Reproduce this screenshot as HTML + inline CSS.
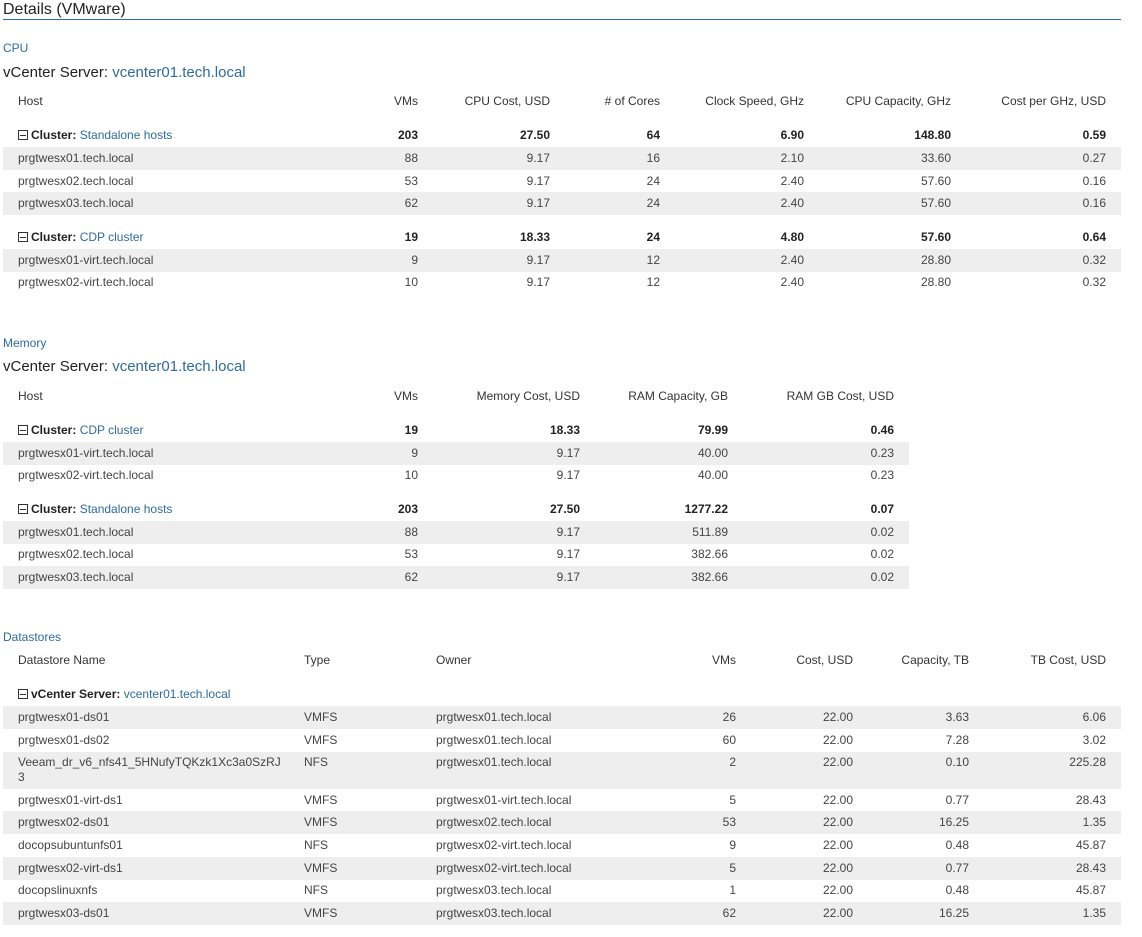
<!DOCTYPE html>
<html><head><meta charset="utf-8"><style>
body{margin:0;width:1142px;height:937px;background:#fff;font-family:"Liberation Sans",Arial,sans-serif;font-size:12px;color:#444;position:relative;overflow:hidden}
.a{position:absolute;white-space:nowrap}
.t{left:3px;top:0;font-size:16px;color:#222;line-height:20px}
.hl{left:3px;top:19px;width:1118px;height:1px;background:#2e6b9e}
.sec{left:3px;font-size:12px;color:#2e6b9e}
.vc{left:3px;font-size:15px;color:#222}
.b{color:#2e6b9e}
.r{position:absolute;left:3px;height:23px;line-height:23px}
.r span{position:absolute;top:0;white-space:nowrap}
.w1{width:1118px}.w2{width:906px}
.g{background:#eee}
.h{color:#333}
.k{font-weight:bold;color:#222}
.n{left:15px}
.box{display:inline-block;width:8px;height:8px;border:1px solid #333;position:relative;margin-right:3px;vertical-align:-1px}
.box:after{content:"";position:absolute;left:1px;right:1px;top:4px;height:1px;background:#333}
.k .b{font-weight:normal}
</style></head><body>
<div class="a t">Details (VMware)</div>
<div class="a hl"></div>

<div class="a sec" style="top:41px">CPU</div>
<div class="a vc" style="top:64px">vCenter Server: <span class="b">vcenter01.tech.local</span></div>
<div class="r w1 h" style="top:90px"><span class="n">Host</span><span style="right:703px">VMs</span><span style="right:571px">CPU Cost, USD</span><span style="right:461px"># of Cores</span><span style="right:317px">Clock Speed, GHz</span><span style="right:170px">CPU Capacity, GHz</span><span style="right:15px">Cost per GHz, USD</span></div>
<div class="r w1 k" style="top:124px"><span class="n"><i class="box"></i>Cluster: <span class="b" style="position:static">Standalone hosts</span></span><span style="right:703px">203</span><span style="right:571px">27.50</span><span style="right:461px">64</span><span style="right:317px">6.90</span><span style="right:170px">148.80</span><span style="right:15px">0.59</span></div>
<div class="r w1 g" style="top:147px"><span class="n">prgtwesx01.tech.local</span><span style="right:703px">88</span><span style="right:571px">9.17</span><span style="right:461px">16</span><span style="right:317px">2.10</span><span style="right:170px">33.60</span><span style="right:15px">0.27</span></div>
<div class="r w1" style="top:170px"><span class="n">prgtwesx02.tech.local</span><span style="right:703px">53</span><span style="right:571px">9.17</span><span style="right:461px">24</span><span style="right:317px">2.40</span><span style="right:170px">57.60</span><span style="right:15px">0.16</span></div>
<div class="r w1 g" style="top:192px"><span class="n">prgtwesx03.tech.local</span><span style="right:703px">62</span><span style="right:571px">9.17</span><span style="right:461px">24</span><span style="right:317px">2.40</span><span style="right:170px">57.60</span><span style="right:15px">0.16</span></div>
<div class="r w1 k" style="top:226px"><span class="n"><i class="box"></i>Cluster: <span class="b" style="position:static">CDP cluster</span></span><span style="right:703px">19</span><span style="right:571px">18.33</span><span style="right:461px">24</span><span style="right:317px">4.80</span><span style="right:170px">57.60</span><span style="right:15px">0.64</span></div>
<div class="r w1 g" style="top:249px"><span class="n">prgtwesx01-virt.tech.local</span><span style="right:703px">9</span><span style="right:571px">9.17</span><span style="right:461px">12</span><span style="right:317px">2.40</span><span style="right:170px">28.80</span><span style="right:15px">0.32</span></div>
<div class="r w1" style="top:271px"><span class="n">prgtwesx02-virt.tech.local</span><span style="right:703px">10</span><span style="right:571px">9.17</span><span style="right:461px">12</span><span style="right:317px">2.40</span><span style="right:170px">28.80</span><span style="right:15px">0.32</span></div>

<div class="a sec" style="top:336px">Memory</div>
<div class="a vc" style="top:358px">vCenter Server: <span class="b">vcenter01.tech.local</span></div>
<div class="r w2 h" style="top:385px"><span class="n">Host</span><span style="right:491px">VMs</span><span style="right:329px">Memory Cost, USD</span><span style="right:181px">RAM Capacity, GB</span><span style="right:15px">RAM GB Cost, USD</span></div>
<div class="r w2 k" style="top:419px"><span class="n"><i class="box"></i>Cluster: <span class="b" style="position:static">CDP cluster</span></span><span style="right:491px">19</span><span style="right:329px">18.33</span><span style="right:181px">79.99</span><span style="right:15px">0.46</span></div>
<div class="r w2 g" style="top:442px"><span class="n">prgtwesx01-virt.tech.local</span><span style="right:491px">9</span><span style="right:329px">9.17</span><span style="right:181px">40.00</span><span style="right:15px">0.23</span></div>
<div class="r w2" style="top:464px"><span class="n">prgtwesx02-virt.tech.local</span><span style="right:491px">10</span><span style="right:329px">9.17</span><span style="right:181px">40.00</span><span style="right:15px">0.23</span></div>
<div class="r w2 k" style="top:498px"><span class="n"><i class="box"></i>Cluster: <span class="b" style="position:static">Standalone hosts</span></span><span style="right:491px">203</span><span style="right:329px">27.50</span><span style="right:181px">1277.22</span><span style="right:15px">0.07</span></div>
<div class="r w2 g" style="top:521px"><span class="n">prgtwesx01.tech.local</span><span style="right:491px">88</span><span style="right:329px">9.17</span><span style="right:181px">511.89</span><span style="right:15px">0.02</span></div>
<div class="r w2" style="top:543px"><span class="n">prgtwesx02.tech.local</span><span style="right:491px">53</span><span style="right:329px">9.17</span><span style="right:181px">382.66</span><span style="right:15px">0.02</span></div>
<div class="r w2 g" style="top:566px"><span class="n">prgtwesx03.tech.local</span><span style="right:491px">62</span><span style="right:329px">9.17</span><span style="right:181px">382.66</span><span style="right:15px">0.02</span></div>

<div class="a sec" style="top:630px">Datastores</div>
<div class="r w1 h" style="top:649px"><span class="n">Datastore Name</span><span style="left:301px">Type</span><span style="left:433px">Owner</span><span style="right:385px">VMs</span><span style="right:268px">Cost, USD</span><span style="right:152px">Capacity, TB</span><span style="right:15px">TB Cost, USD</span></div>
<div class="r w1 k" style="top:683px"><span class="n"><i class="box"></i>vCenter Server: <span class="b" style="position:static">vcenter01.tech.local</span></span></div>
<div class="r w1 g" style="top:706px"><span class="n">prgtwesx01-ds01</span><span style="left:301px">VMFS</span><span style="left:433px">prgtwesx01.tech.local</span><span style="right:385px">26</span><span style="right:268px">22.00</span><span style="right:152px">3.63</span><span style="right:15px">6.06</span></div>
<div class="r w1" style="top:729px"><span class="n">prgtwesx01-ds02</span><span style="left:301px">VMFS</span><span style="left:433px">prgtwesx01.tech.local</span><span style="right:385px">60</span><span style="right:268px">22.00</span><span style="right:152px">7.28</span><span style="right:15px">3.02</span></div>
<div class="r w1 g" style="top:752px;height:37px"><span class="n" style="line-height:15px;top:3px">Veeam_dr_v6_nfs41_5HNufyTQKzk1Xc3a0SzRJ<br>3</span><span style="left:301px;line-height:21px">NFS</span><span style="left:433px;line-height:21px">prgtwesx01.tech.local</span><span style="right:385px;line-height:21px">2</span><span style="right:268px;line-height:21px">22.00</span><span style="right:152px;line-height:21px">0.10</span><span style="right:15px;line-height:21px">225.28</span></div>
<div class="r w1" style="top:789px"><span class="n">prgtwesx01-virt-ds1</span><span style="left:301px">VMFS</span><span style="left:433px">prgtwesx01-virt.tech.local</span><span style="right:385px">5</span><span style="right:268px">22.00</span><span style="right:152px">0.77</span><span style="right:15px">28.43</span></div>
<div class="r w1 g" style="top:811px"><span class="n">prgtwesx02-ds01</span><span style="left:301px">VMFS</span><span style="left:433px">prgtwesx02.tech.local</span><span style="right:385px">53</span><span style="right:268px">22.00</span><span style="right:152px">16.25</span><span style="right:15px">1.35</span></div>
<div class="r w1" style="top:834px"><span class="n">docopsubuntunfs01</span><span style="left:301px">NFS</span><span style="left:433px">prgtwesx02-virt.tech.local</span><span style="right:385px">9</span><span style="right:268px">22.00</span><span style="right:152px">0.48</span><span style="right:15px">45.87</span></div>
<div class="r w1 g" style="top:857px"><span class="n">prgtwesx02-virt-ds1</span><span style="left:301px">VMFS</span><span style="left:433px">prgtwesx02-virt.tech.local</span><span style="right:385px">5</span><span style="right:268px">22.00</span><span style="right:152px">0.77</span><span style="right:15px">28.43</span></div>
<div class="r w1" style="top:879px"><span class="n">docopslinuxnfs</span><span style="left:301px">NFS</span><span style="left:433px">prgtwesx03.tech.local</span><span style="right:385px">1</span><span style="right:268px">22.00</span><span style="right:152px">0.48</span><span style="right:15px">45.87</span></div>
<div class="r w1 g" style="top:902px"><span class="n">prgtwesx03-ds01</span><span style="left:301px">VMFS</span><span style="left:433px">prgtwesx03.tech.local</span><span style="right:385px">62</span><span style="right:268px">22.00</span><span style="right:152px">16.25</span><span style="right:15px">1.35</span></div>
</body></html>
